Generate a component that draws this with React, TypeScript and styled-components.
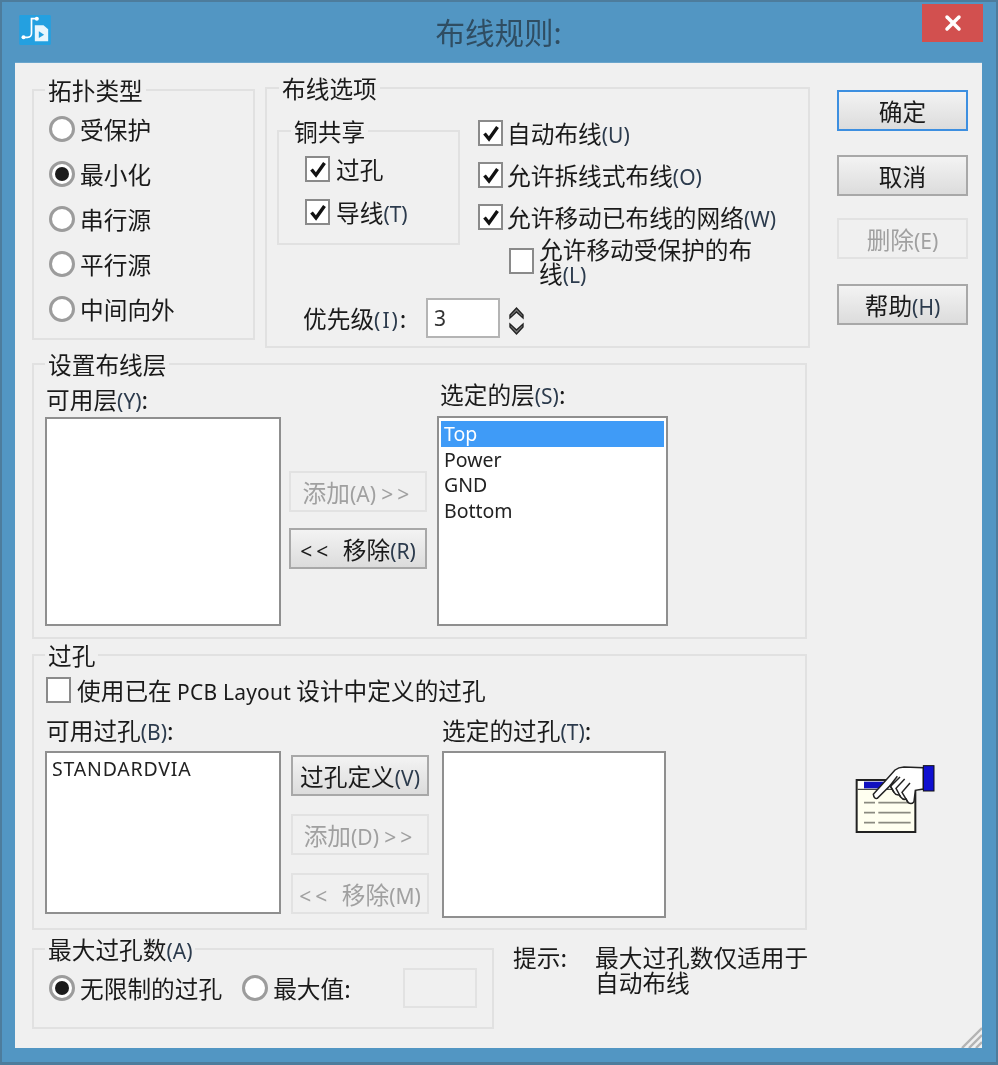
import styled, { createGlobalStyle } from "styled-components";
import { X } from "lucide-react";

const GlobalStyle = createGlobalStyle`
  html, body {
    margin: 0;
    padding: 0;
    background: #5296c3;
  }
`;

const Win = styled.div`
  box-sizing: border-box;
  width: 998px;
  height: 1065px;
  display: flex;
  flex-direction: column;
  padding: 0 14px 14px 13px;
  background: #5296c3;
  border: 2px solid #4d7c9c;
  border-bottom-width: 3px;
  font-family: "Noto Sans CJK SC", "Noto Sans", sans-serif;
  font-size: 23.7px;
  color: #1a1a1a;
  filter: blur(0.45px);
`;
const TitleBar = styled.div`
  position: relative;
  height: 60px;
  flex: none;
  display: flex;
  align-items: center;
  justify-content: center;
`;
const AppIcon = styled.svg`
  position: absolute;
  left: 4px;
  top: 13px;
  width: 32px;
  height: 30px;
`;
const Title = styled.div`
  font-size: 29.5px;
  line-height: 32px;
  margin-top: -3px;
  color: #2f4d62;
`;
const CloseBtn = styled.div`
  position: absolute;
  right: -1px;
  top: 2px;
  width: 61px;
  height: 38px;
  display: flex;
  align-items: center;
  justify-content: center;
  background: #d2504f;
  color: #fff;
`;
const Client = styled.div`
  position: relative;
  flex: 1;
  display: flex;
  padding: 12px 0 0 17px;
  background: #f0f0f0;
  border-top: 1px solid #6aa5cc;
  box-sizing: border-box;
`;
const LeftCol = styled.div`
  width: 778px;
  display: flex;
  flex-direction: column;
`;
const RightCol = styled.div`
  margin: 15px 0 0 27px;
  width: 131px;
  display: flex;
  flex-direction: column;
`;
const TopRow = styled.div`
  display: flex;
  align-items: flex-start;
  gap: 10px;
`;
const Group = styled.fieldset<{ $w: number; $h: number }>`
  box-sizing: border-box;
  width: ${(p) => p.$w}px;
  height: ${(p) => p.$h}px;
  flex: none;
  min-width: 0;
  margin: 0;
  padding: 0;
  border: 2px solid #e1e1e1;
`;
const Legend = styled.legend<{ $left?: number }>`
  margin-left: ${(p) => p.$left ?? 0}px;
  padding: 0 3px;
  line-height: 26px;
  font-size: 23.7px;
`;
const TopologyGroup = styled(Group)`
  margin-top: 2px;
  padding: 13px 0 0 15px;
`;
const RadioStack = styled.div`
  display: flex;
  flex-direction: column;
  gap: 19px;
`;
const RoutingGroup = styled(Group)`
  padding: 16px 0 0 10px;
`;
const RoutingTop = styled.div`
  display: flex;
  align-items: flex-start;
  height: 168px;
`;
const CopperGroup = styled(Group)`
  margin-top: 1px;
  padding: 12px 0 0 26px;
  display: flex;
  flex-direction: column;
  gap: 17px;
`;
const OptionStack = styled.div`
  margin: 3px 0 0 18px;
  display: flex;
  flex-direction: column;
  gap: 16px;
`;
const Control = styled.label<{ $left?: number; $gap?: number }>`
  display: flex;
  align-items: center;
  gap: ${(p) => p.$gap ?? 6}px;
  height: 26px;
  line-height: 26px;
  white-space: nowrap;
  margin-left: ${(p) => p.$left ?? 0}px;
`;
const WrapControl = styled(Control)`
  height: 48px;
  line-height: 24px;
  margin: -9px 0 0 31px;
  white-space: normal;
`;
const WrapText = styled.span`
  display: block;
  width: 225px;
`;
const Radio = styled.span<{ $on?: boolean }>`
  box-sizing: border-box;
  flex: none;
  width: 26px;
  height: 26px;
  border-radius: 50%;
  border: 3px solid #9c9c9c;
  background: #fff;
  display: flex;
  align-items: center;
  justify-content: center;
  &::after {
    content: "";
    width: 14px;
    height: 14px;
    border-radius: 50%;
    background: ${(p) => (p.$on ? "#1c1c1c" : "transparent")};
  }
`;
const Check = styled.span`
  box-sizing: border-box;
  flex: none;
  width: 25px;
  height: 26px;
  border: 2px solid #8a8a8a;
  background: #fff;
  display: flex;
  align-items: center;
  justify-content: center;
`;
const Key = styled.span<{ $dim?: boolean }>`
  font-family: "Noto Sans", sans-serif;
  font-size: 21px;
  line-height: 1;
  color: ${(p) => (p.$dim ? "inherit" : "#2c3b4d")};
`;
const PriorityKey = styled(Key)`
  letter-spacing: 2px;
`;
const Latin = styled.span`
  font-family: "Noto Sans", sans-serif;
  font-size: 21px;
  line-height: 1;
  letter-spacing: 0.2px;
`;
const Arrows = styled.span`
  font-family: "Noto Sans", sans-serif;
  font-size: 21px;
  line-height: 1;
  letter-spacing: 4px;
`;
const PriorityRow = styled.div`
  display: flex;
  align-items: center;
  margin: 13px 0 0 26px;
`;
const PriorityLabel = styled.span`
  width: 123px;
`;
const SpinInput = styled.div`
  box-sizing: border-box;
  width: 74px;
  height: 40px;
  padding-left: 6px;
  border: 2px solid #b4b4b4;
  background: #fff;
  font-family: "Noto Sans", sans-serif;
  font-size: 21px;
  line-height: 36px;
  color: #333;
`;
const Spinner = styled.svg`
  margin: 5px 0 0 8px;
  width: 17px;
  height: 34px;
`;
const LayerGroup = styled(Group)`
  margin-top: 3px;
  padding: 4px 0 0 11px;
`;
const ViaGroup = styled(Group)`
  margin-top: 3px;
  padding: 9px 0 0 11px;
`;
const Transfer = styled.div<{ $top?: number }>`
  display: flex;
  align-items: flex-start;
  margin-top: ${(p) => p.$top ?? 0}px;
`;
const ListCol = styled.div<{ $top?: number; $left?: number }>`
  display: flex;
  flex-direction: column;
  margin-top: ${(p) => p.$top ?? 0}px;
  margin-left: ${(p) => p.$left ?? 0}px;
`;
const ListLabel = styled.div<{ $gap: number; $left?: number }>`
  line-height: 26px;
  margin-bottom: ${(p) => p.$gap}px;
  margin-left: ${(p) => p.$left ?? 1}px;
  white-space: nowrap;
`;
const ListBox = styled.div<{ $w: number; $h: number }>`
  box-sizing: border-box;
  width: ${(p) => p.$w}px;
  height: ${(p) => p.$h}px;
  padding: 3px 2px;
  background: #fff;
  border: 2px solid #8f8f8f;
  font-family: "Noto Sans", sans-serif;
  font-size: 19.5px;
`;
const ListItem = styled.div<{ $sel?: boolean; $wide?: boolean }>`
  height: 25.6px;
  line-height: 25px;
  padding-left: 3px;
  letter-spacing: ${(p) => (p.$wide ? "0.8px" : "0")};
  background: ${(p) => (p.$sel ? "#3f9bf7" : "transparent")};
  color: ${(p) => (p.$sel ? "#fff" : "#222")};
`;
const ButtonCol = styled.div<{ $top: number; $left: number; $gap: number }>`
  display: flex;
  flex-direction: column;
  gap: ${(p) => p.$gap}px;
  margin-top: ${(p) => p.$top}px;
  margin-left: ${(p) => p.$left}px;
`;
const Btn = styled.div<{ $off?: boolean; $main?: boolean; $w?: number; $top?: number }>`
  box-sizing: border-box;
  width: ${(p) => p.$w ?? 131}px;
  height: 41px;
  margin-top: ${(p) => p.$top ?? 0}px;
  text-align: center;
  line-height: 38px;
  white-space: pre;
  border: 2px solid ${(p) => (p.$main ? "#3d8fe0" : p.$off ? "#e2e2e2" : "#a8a8a8")};
  background: ${(p) => (p.$off ? "#f0f0f0" : "linear-gradient(#f3f3f3, #dcdcdc)")};
  color: ${(p) => (p.$off ? "#a0a0a0" : "#1a1a1a")};
`;
const HandIcon = styled.svg`
  margin: 430px 0 0 3px;
  width: 105px;
  height: 85px;
`;
const BottomRow = styled.div`
  display: flex;
  align-items: flex-start;
  margin-top: 6px;
`;
const MaxGroup = styled(Group)`
  padding: 6px 0 0 15px;
  display: flex;
`;
const MaxRow = styled.div`
  display: flex;
  align-items: center;
  height: 40px;
`;
const MaxInput = styled.div`
  box-sizing: border-box;
  width: 74px;
  height: 40px;
  margin-left: 52px;
  border: 2px solid #e2e2e2;
  background: #f0f0f0;
`;
const Hint = styled.div`
  display: flex;
  margin: 9px 0 0 19px;
  line-height: 25px;
`;
const HintLabel = styled.div`
  width: 82px;
`;
const HintText = styled.div`
  width: 218px;
`;
const Grip = styled.svg`
  position: absolute;
  right: 0;
  bottom: 0;
  width: 22px;
  height: 22px;
`;

function CheckMark() {
  return (
    <svg width="18" height="18" viewBox="0 0 18 18">
      <path d="M2.5 9.5 L7 15 L15.5 3" fill="none" stroke="#111" strokeWidth="3.4" />
    </svg>
  );
}

function RadioRow({ label, on, left }: { label: string; on?: boolean; left?: number }) {
  return (
    <Control $left={left} $gap={5}>
      <Radio $on={on} />
      {label}
    </Control>
  );
}

function CheckRow({ label, hot, gap }: { label: string; hot?: string; gap?: number }) {
  return (
    <Control $gap={gap}>
      <Check>
        <CheckMark />
      </Check>
      <span>
        {label}
        {hot && <Key>{hot}</Key>}
      </span>
    </Control>
  );
}

export default function App() {
  return (
    <>
      <GlobalStyle />
      <Win>
        <TitleBar>
          <AppIcon viewBox="57 45 95 90">
            <rect x="57" y="45" width="95" height="90" rx="4" fill="#24a0e0" />
            <path d="M110 56 H94 V100 Q94 112 82 112 H72" fill="none" stroke="#fff" strokeWidth="5" />
            <circle cx="110" cy="56" r="6" fill="#fff" />
            <circle cx="70" cy="112" r="6" fill="#fff" />
            <path d="M104 76 H130 L144 88 V124 H104 Z" fill="#e8f6fd" />
            <path d="M116 94 L132 104 L116 114 Z" fill="#24a0e0" />
          </AppIcon>
          <Title>布线规则:</Title>
          <CloseBtn>
            <X size={24} strokeWidth={3.5} />
          </CloseBtn>
        </TitleBar>
        <Client>
          <LeftCol>
            <TopRow>
              <TopologyGroup $w={223} $h={263}>
                <Legend $left={-4}>拓扑类型</Legend>
                <RadioStack>
                  <RadioRow label="受保护" />
                  <RadioRow label="最小化" on />
                  <RadioRow label="串行源" />
                  <RadioRow label="平行源" />
                  <RadioRow label="中间向外" />
                </RadioStack>
              </TopologyGroup>
              <RoutingGroup $w={545} $h={273}>
                <Legend $left={2}>布线选项</Legend>
                <RoutingTop>
                  <CopperGroup $w={183} $h={127}>
                    <Legend $left={-14}>铜共享</Legend>
                    <CheckRow label="过孔" />
                    <CheckRow label="导线" hot="(T)" />
                  </CopperGroup>
                  <OptionStack>
                    <CheckRow label="自动布线" hot="(U)" gap={4} />
                    <CheckRow label="允许拆线式布线" hot="(O)" gap={4} />
                    <CheckRow label="允许移动已布线的网络" hot="(W)" gap={4} />
                    <WrapControl $gap={5}>
                      <Check />
                      <WrapText>
                        允许移动受保护的布线<Key>(L)</Key>
                      </WrapText>
                    </WrapControl>
                  </OptionStack>
                </RoutingTop>
                <PriorityRow>
                  <PriorityLabel>
                    优先级<PriorityKey>(I)</PriorityKey>:
                  </PriorityLabel>
                  <SpinInput>3</SpinInput>
                  <Spinner viewBox="0 0 17 34">
                    <path d="M2 11 L8.5 4 L15 11 L15 14 L8.5 8 L2 14 Z" fill="#777" stroke="#222" strokeWidth="1.4" />
                    <path d="M2 20 L8.5 26 L15 20 L15 23 L8.5 30 L2 23 Z" fill="#777" stroke="#222" strokeWidth="1.4" />
                  </Spinner>
                </PriorityRow>
              </RoutingGroup>
            </TopRow>

            <LayerGroup $w={775} $h={288}>
              <Legend>设置布线层</Legend>
              <Transfer>
                <ListCol $top={5}>
                  <ListLabel $gap={5}>
                    可用层<Key>(Y)</Key>:
                  </ListLabel>
                  <ListBox $w={236} $h={209} />
                </ListCol>
                <ButtonCol $top={90} $left={8} $gap={16}>
                  <Btn $off $w={138}>
                    添加<Key $dim>(A)</Key> <Arrows>&gt;&gt;</Arrows>
                  </Btn>
                  <Btn $w={138}>
                    <Arrows>&lt;&lt;</Arrows>{"  "}移除<Key>(R)</Key>
                  </Btn>
                </ButtonCol>
                <ListCol $left={10}>
                  <ListLabel $gap={9} $left={3}>
                    选定的层<Key>(S)</Key>:
                  </ListLabel>
                  <ListBox $w={231} $h={210}>
                    <ListItem $sel>Top</ListItem>
                    <ListItem>Power</ListItem>
                    <ListItem>GND</ListItem>
                    <ListItem>Bottom</ListItem>
                  </ListBox>
                </ListCol>
              </Transfer>
            </LayerGroup>

            <ViaGroup $w={775} $h={288}>
              <Legend>过孔</Legend>
              <Control $left={1}>
                <Check />
                <span>
                  使用已在 <Latin>PCB Layout</Latin> 设计中定义的过孔
                </span>
              </Control>
              <Transfer $top={14}>
                <ListCol>
                  <ListLabel $gap={8}>
                    可用过孔<Key>(B)</Key>:
                  </ListLabel>
                  <ListBox $w={236} $h={163}>
                    <ListItem $wide>STANDARDVIA</ListItem>
                  </ListBox>
                </ListCol>
                <ButtonCol $top={38} $left={10} $gap={18}>
                  <Btn $w={138}>
                    过孔定义<Key>(V)</Key>
                  </Btn>
                  <Btn $off $w={138}>
                    添加<Key $dim>(D)</Key> <Arrows>&gt;&gt;</Arrows>
                  </Btn>
                  <Btn $off $w={138}>
                    <Arrows>&lt;&lt;</Arrows>{"  "}移除<Key $dim>(M)</Key>
                  </Btn>
                </ButtonCol>
                <ListCol $left={13}>
                  <ListLabel $gap={8} $left={0}>
                    选定的过孔<Key>(T)</Key>:
                  </ListLabel>
                  <ListBox $w={224} $h={167} />
                </ListCol>
              </Transfer>
            </ViaGroup>

            <BottomRow>
              <MaxGroup $w={462} $h={93}>
                <Legend $left={-4}>
                  最大过孔数<Key>(A)</Key>
                </Legend>
                <MaxRow>
                  <RadioRow label="无限制的过孔" on />
                  <RadioRow label="最大值:" left={20} />
                  <MaxInput />
                </MaxRow>
              </MaxGroup>
              <Hint>
                <HintLabel>提示:</HintLabel>
                <HintText>最大过孔数仅适用于自动布线</HintText>
              </Hint>
            </BottomRow>
          </LeftCol>

          <RightCol>
            <Btn $main>确定</Btn>
            <Btn $top={24}>取消</Btn>
            <Btn $off $top={22}>
              删除<Key $dim>(E)</Key>
            </Btn>
            <Btn $top={25}>
              帮助<Key>(H)</Key>
            </Btn>
            <HandIcon viewBox="0 0 315 255">
              <rect x="50" y="75" width="176" height="156" fill="#fffff0" stroke="#222" strokeWidth="6" />
              <rect x="72" y="80" width="74" height="20" fill="#1010c0" />
              <rect x="55" y="80" width="15" height="20" fill="#fff" />
              <path d="M53 103 H223" stroke="#222" strokeWidth="3" />
              <path
                d="M72 143 H105 M115 143 H212 M72 173 H105 M115 173 H212 M72 203 H105 M115 203 H212"
                stroke="#8a8a80"
                strokeWidth="5"
              />
              <path
                d="M100 118 L165 45 Q175 37 192 36 L250 38 V102 L226 106 L222 140 Q214 150 204 142 L198 132 Q190 136 182 126 L178 120 Q168 122 162 112 L150 92 L112 130 Q102 132 100 118 Z"
                fill="#fff"
                stroke="#222"
                strokeWidth="4.5"
              />
              <path
                d="M150 92 L172 64 M162 112 L152 94 L180 66 M182 126 L168 100 L194 72 M204 142 L186 112 L210 84"
                fill="none"
                stroke="#222"
                strokeWidth="4.5"
              />
              <rect x="250" y="32" width="32" height="76" fill="#1010d0" stroke="#111" strokeWidth="3" />
            </HandIcon>
          </RightCol>

          <Grip viewBox="0 0 22 22">
            <path d="M22 2 L2 22 M22 9 L9 22 M22 16 L16 22" stroke="#b4b4b4" strokeWidth="2.4" />
          </Grip>
        </Client>
      </Win>
    </>
  );
}
